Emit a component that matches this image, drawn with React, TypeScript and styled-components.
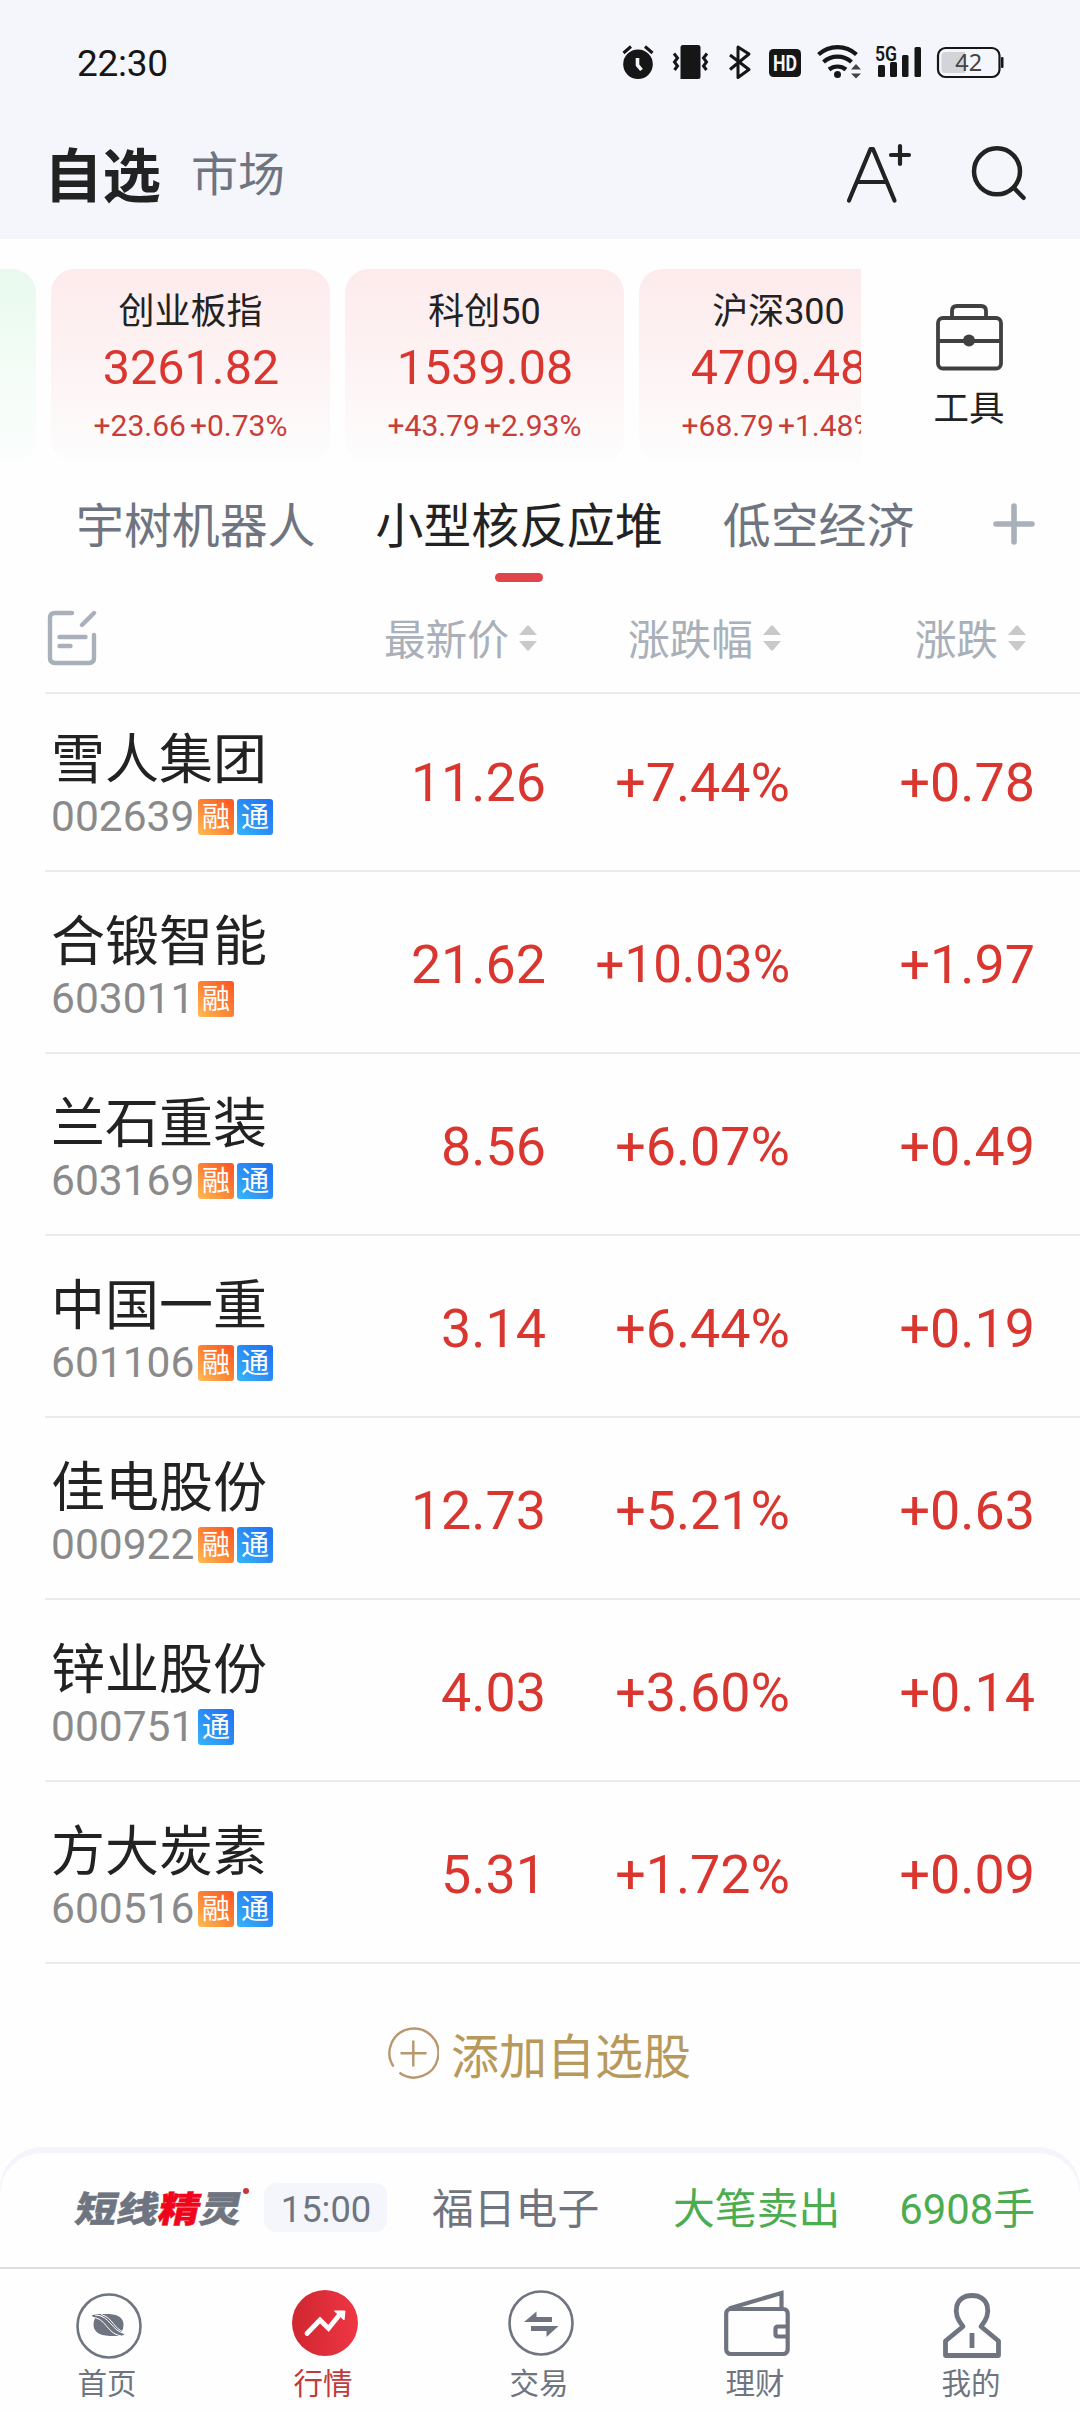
import React from 'react';
import styled, { createGlobalStyle } from 'styled-components';

const INK = '#222222';
const GREY = '#6f7580';
const SOFT = '#a9b0ba';
const RED = '#d9362f';
const PANEL = '#f4f6fb';

const Global = createGlobalStyle`
  * { box-sizing: border-box; }
  html, body { margin: 0; padding: 0; background: #fefefe; }
  body {
    font-family: Roboto, "Noto Sans CJK SC", sans-serif;
    color: ${INK};
  }
`;

const Screen = styled.div`
  width: 1080px;
  height: 2412px;
  display: flex;
  flex-direction: column;
  overflow: hidden;
  white-space: nowrap;
  svg { display: block; flex: none; }
`;

const StatusBar = styled.header`
  height: 124px;
  padding: 0 76px 0 77px;
  display: flex;
  align-items: center;
  justify-content: space-between;
  background: ${PANEL};
`;

const Clock = styled.span`
  margin-top: 3px;
  font-size: 37px;
  line-height: 40px;
  letter-spacing: -0.3px;
  color: #161616;
`;

const TitleBar = styled.div`
  height: 115px;
  padding: 0 54px 18px 44px;
  display: flex;
  align-items: center;
  background: ${PANEL};
`;

const PageTitle = styled.h1`
  margin: 8px 30px 0 0;
  font-size: 58.5px;
  line-height: 64px;
  font-weight: 700;
`;

const PageLink = styled.span`
  margin-top: 5px;
  font-size: 47px;
  line-height: 64px;
  color: ${GREY};
`;

const TitleActions = styled.div`
  margin-left: auto;
  display: flex;
  align-items: center;
  gap: 58px;
`;

const IndexStrip = styled.section`
  display: flex;
  padding-top: 30px;
  height: 224px;
`;

const IndexTrack = styled.div`
  width: 861px;
  display: flex;
  gap: 15px;
  overflow: hidden;
`;

const IndexCard = styled.div<{ $down?: boolean; $sliver?: boolean }>`
  flex: none;
  width: ${(p) => (p.$sliver ? 36 : 279)}px;
  height: 194px;
  padding-top: 21px;
  display: flex;
  flex-direction: column;
  align-items: center;
  border-radius: ${(p) => (p.$sliver ? '0 24px 24px 0' : '24px')};
  background: ${(p) =>
    p.$down
      ? 'linear-gradient(#e8f9ee, #f4fdf7 55%, #fcfdfd)'
      : 'linear-gradient(#fdebec, #fdf3f4 50%, #fcfdfd)'};
`;

const IndexName = styled.span`
  font-size: 36px;
  line-height: 44px;
`;

const IndexValue = styled.span`
  margin: 5px 0 0 1px;
  font-size: 48.5px;
  line-height: 58px;
  color: ${RED};
`;

const IndexDelta = styled.span`
  margin-top: 11px;
  display: flex;
  gap: 4px;
  font-size: 30px;
  line-height: 36px;
  color: #c93d38;
`;

const ToolButton = styled.div`
  flex: 1;
  padding: 34px 3px 0 0;
  display: flex;
  flex-direction: column;
  align-items: center;
  gap: 15px;
  font-size: 35.5px;
  line-height: 46px;
`;

const Tabs = styled.nav`
  height: 119px;
  padding: 40px 45px 0 76px;
  display: flex;
  gap: 60px;
`;

const Tab = styled.div<{ $active?: boolean }>`
  display: flex;
  flex-direction: column;
  align-items: center;
  gap: 22px;
  font-size: 47.9px;
  line-height: 48px;
  color: ${(p) => (p.$active ? INK : GREY)};
`;

const TabBar = styled.i`
  width: 48px;
  height: 9px;
  border-radius: 5px;
  background: #e0454b;
`;

const AddTab = styled.div`
  margin-left: auto;
`;

const Columns = styled.div`
  margin-left: 45px;
  padding-right: 45px;
  display: grid;
  grid-template-columns: 256px 245px 244px 245px;
  align-items: center;
  border-bottom: 2px solid #ebebeb;
`;

const HeadRow = styled(Columns)`
  height: 112px;
  padding-top: 2px;
`;

const HeadCell = styled.div`
  display: flex;
  justify-content: flex-end;
  align-items: center;
  gap: 10px;
  padding-right: 9px;
  font-size: 41.7px;
  line-height: 50px;
  color: ${SOFT};
  span { padding-top: 5px; }
`;

const StockRow = styled(Columns)<{ $first?: boolean }>`
  height: ${(p) => (p.$first ? 178 : 182)}px;
  padding-top: ${(p) => (p.$first ? 2 : 6)}px;
`;

const StockId = styled.div`
  padding-left: 6px;
`;

const StockName = styled.div`
  font-size: 54px;
  line-height: 62px;
`;

const StockMeta = styled.div`
  margin-top: 5px;
  display: flex;
  align-items: center;
  gap: 3px;
  height: 40px;
`;

const StockCode = styled.span`
  width: 144px;
  font-size: 42.5px;
  line-height: 40px;
  color: #8a8a8a;
`;

const Badge = styled.span<{ $kind: string }>`
  width: 36px;
  height: 36px;
  border-radius: 3px;
  text-align: center;
  font-size: 28px;
  line-height: 37px;
  color: #fff;
  background: ${(p) =>
    p.$kind === '融'
      ? 'linear-gradient(to top right, #ffbd55, #fb8838 45%, #ff5322)'
      : 'linear-gradient(to top right, #37b6f8, #2b8df4 50%, #1f70f2)'};
`;

const Figure = styled.div<{ $long?: boolean }>`
  text-align: right;
  font-size: ${(p) => (p.$long ? 51 : 53.8)}px;
  line-height: 64px;
  color: ${RED};
`;

const AddStock = styled.div`
  height: 183px;
  padding: 0 0 6px 387px;
  display: flex;
  align-items: center;
  gap: 12px;
  font-size: 48px;
  color: #b8995c;
`;

const AlertShell = styled.section`
  height: 120px;
  padding-top: 6px;
  border-radius: 42px 42px 0 0;
  background: #f3f5fa;
`;

const AlertBar = styled.div`
  height: 114px;
  padding: 0 45px 5px 76px;
  display: flex;
  align-items: center;
  border-radius: 42px 42px 0 0;
  background: #fefefe;
  font-size: 41.8px;
  line-height: 50px;
  color: ${GREY};
`;

const Brand = styled.div`
  width: 188px;
  height: 48px;
  margin-top: 5px;
  display: flex;
  position: relative;
`;

const BrandText = styled.b`
  font-size: 41.5px;
  line-height: 48px;
  font-weight: 900;
  -webkit-text-stroke: 0.6px currentColor;
  transform: skewX(-12deg) scaleY(0.86);
  em { font-style: normal; color: #f0041c; }
`;

const BrandDot = styled.i`
  position: absolute;
  left: 167px;
  top: 2px;
  width: 6px;
  height: 6px;
  border-radius: 50%;
  background: #c8363c;
`;

const TimePill = styled.span`
  width: 123px;
  height: 49px;
  margin-right: 45px;
  padding-left: 1px;
  border-radius: 12px;
  background: ${PANEL};
  text-align: center;
  font-size: 36.3px;
  line-height: 54px;
`;

const AlertText = styled.span`
  padding-top: 5px;
`;

const Sold = styled(AlertText)`
  margin-left: auto;
  display: flex;
  gap: 59px;
  color: #4cac50;
`;

const BottomNav = styled.nav`
  height: 145px;
  display: grid;
  grid-template-columns: repeat(5, 1fr);
  border-top: 2px solid #dedfe1;
  background: #fefefe;
`;

const NavItem = styled.div<{ $active?: boolean }>`
  padding-top: 20px;
  display: flex;
  flex-direction: column;
  align-items: center;
  font-size: 29.5px;
  line-height: 36px;
  color: ${(p) => (p.$active ? '#c23a3a' : GREY)};
  svg { margin: 0 0 7px 2px; }
  span { margin-left: -2px; }
`;

const StatusIcons = () => (
  <svg width="384" height="40" viewBox="620 42 384 40" fill="#161616">
    <circle cx="638" cy="64.3" r="14.8" />
    <path d="M623.5 53l7.5-6.5M652.5 53l-7.5-6.5" stroke="#161616" strokeWidth="3" />
    <path d="M637.5 58v7l4 5" stroke={PANEL} strokeWidth="3.6" fill="none" />
    <path d="M683 45h15q2.500 0 2.500 2.500v29q0 2.500-2.500 2.500H680.500V47.500q0-2.500 2.500-2.500z" />
    <path d="M674 53l3.500 4.500-3 4 3 4-3 4M707 53l-3.500 4.500 3 4-3 4 3 4" transform="translate(0 .5)" stroke="#161616" strokeWidth="3" fill="none" />
    <path d="M730 55l19 14.500-11 8V47l11 7-19 15.500" stroke="#161616" strokeWidth="3" fill="none" strokeLinejoin="round" />
    <rect x="769" y="49" width="32" height="28" rx="4.500" />
    <text x="785" y="71" textAnchor="middle" fontFamily="Roboto, sans-serif" fontSize="22.5" fontWeight="700" fill={PANEL} textLength="24" lengthAdjust="spacingAndGlyphs">HD</text>
    <g fill="none" stroke="#161616" strokeWidth="4.200">
      <path d="M818.500 54.500a28 28 0 0 1 38 0" />
      <path d="M823.500 62a21 21 0 0 1 28 0" />
      <path d="M829 69.500a13.500 13.500 0 0 1 17 0" />
    </g>
    <circle cx="837.500" cy="74.500" r="3.500" />
    <path d="M851 69.500l5-5.500 5 5.500zM851 73.500l5 5 5-5z" fill="#444" />
    <text x="875" y="60.500" fontFamily="Roboto, sans-serif" fontSize="21" fontWeight="600" textLength="22" lengthAdjust="spacingAndGlyphs">5G</text>
    <rect x="878" y="65" width="7" height="12" rx="1.500" />
    <rect x="890" y="62" width="7" height="15" rx="1.500" />
    <rect x="902" y="55" width="6.500" height="22" rx="1.500" />
    <rect x="914.500" y="47" width="6.500" height="30" rx="1.500" />
    <rect x="938" y="48" width="61.500" height="29" rx="7.500" fill="none" stroke="#161616" strokeWidth="2.200" />
    <path d="M945 52h20v21h-20q-3.500 0-3.500-3.500v-14q0-3.500 3.500-3.500z" fill="#d2d4d8" />
    <rect x="1001" y="57" width="2.500" height="11" rx="1" />
    <text x="968.700" y="71.300" textAnchor="middle" fontFamily="Noto Sans, sans-serif" fontSize="23.500" fill="#444">42</text>
  </svg>
);

const FontSizeIcon = () => (
  <svg width="66" height="62" viewBox="846 142 66 62" fill="none" stroke={INK} strokeWidth="4.200" strokeLinecap="round" strokeLinejoin="round">
    <path d="M849 200.500L870.500 149h2.500L894.500 200.500M857 182h29M900 146v18M891 155h18" />
  </svg>
);

const SearchIcon = () => (
  <svg width="56" height="62" viewBox="970 142 56 62" fill="none" stroke={INK} strokeWidth="4.500" strokeLinecap="round">
    <circle cx="997" cy="171.300" r="23" />
    <path d="M1014.500 188.500l9 9.300" />
  </svg>
);

const BriefcaseIcon = () => (
  <svg width="68" height="68" viewBox="935 303 68 68" fill="none" stroke="#404040" strokeWidth="3.800">
    <path d="M952 317v-6q0-5 5-5h24q5 0 5 5v6" />
    <rect x="938" y="318" width="63" height="50.500" rx="5" />
    <path d="M938 341h63" />
    <circle cx="969" cy="340.500" r="6" fill="#404040" stroke="none" />
  </svg>
);

const PlusIcon = () => (
  <svg width="42" height="42" viewBox="0 0 42 42" stroke={SOFT} strokeWidth="5.600" strokeLinecap="round">
    <path d="M21 3v36M3 21h36" />
  </svg>
);

const EditIcon = () => (
  <svg width="54" height="56" viewBox="45 610 54 56" fill="none" stroke={SOFT} strokeWidth="4.400" strokeLinecap="round" strokeLinejoin="round">
    <path d="M72 613H55q-5 0-5 5v40q0 5 5 5h34q5 0 5-5V635M94 613L82 625M59.500 637h26M59.500 646h11" />
  </svg>
);

const SortIcon = () => (
  <svg width="18" height="26" viewBox="0 0 18 26" fill="#c9c9c9">
    <path d="M0 10L8 .8q1-.8 2 0L18 10zM0 16l8 9.200q1 .8 2 0L18 16z" />
  </svg>
);

const CirclePlusIcon = () => (
  <svg width="52" height="52" viewBox="387.500 2027.500 52 52" fill="none" stroke="#b8976c" strokeWidth="2.400">
    <path d="M400 2073.300A24.500 24.500 0 1 0 394 2067M401 2053.700h26M413.800 2041v26" />
  </svg>
);

const HomeIcon = () => (
  <svg width="66" height="70" viewBox="76 2289 66 70">
    <circle cx="109" cy="2326" r="31.500" fill="none" stroke={GREY} strokeWidth="2.600" />
    <path d="M91.500 2315.500q3-1.500 8-1.500h10q14 1 14 11 0 4-2 7l3 2.500q-3 1.500-9 1.500h-6q-16-1-16-11.500 0-3.500 1.500-6z" fill={GREY} />
    <path d="M91 2317.500c15-1 15 16 30 18.500M95 2315c15 0 17 17 30 18.500M101 2314.500c12 3 13 15 23 17.500" fill="none" stroke="#fefefe" strokeWidth="1" />
  </svg>
);

const TrendIcon = () => (
  <svg width="66" height="70" viewBox="292 2289 66 70">
    <defs>
      <linearGradient id="trend" x1="0" x2="1">
        <stop offset="0" stopColor="#cf2630" />
        <stop offset="1" stopColor="#ef3644" />
      </linearGradient>
    </defs>
    <circle cx="325" cy="2323" r="33" fill="url(#trend)" />
    <path d="M307 2333.500l13-13.500 8.500 8.500 12-15" fill="none" stroke="#fff" strokeWidth="4.800" strokeLinecap="round" />
    <path d="M334.500 2311h10.500l-1 9z" fill="#fff" stroke="#fff" strokeWidth="1" />
  </svg>
);

const TradeIcon = () => (
  <svg width="66" height="70" viewBox="508 2289 66 70">
    <circle cx="541" cy="2323" r="31.500" fill="none" stroke={GREY} strokeWidth="2.600" />
    <path d="M524 2322l12.500-10.500v5.500H552v5zM558.500 2326L546.500 2337v-6H531v-5z" fill={GREY} />
  </svg>
);

const WalletIcon = () => (
  <svg width="66" height="70" viewBox="724 2289 66 70" fill="none" stroke={GREY} strokeWidth="4.200">
    <rect x="726.200" y="2309" width="61.500" height="45" rx="4.500" />
    <path d="M729 2308.500L781.500 2293v16M787 2326.500h-9q-2.500 0-2.500 2.500v5q0 2.500 2.500 2.500h9" />
  </svg>
);

const PersonIcon = () => (
  <svg width="60" height="70" viewBox="943 2289 60 70" fill="none" stroke={GREY} strokeWidth="4.800" strokeLinejoin="round">
    <path d="M963 2326.500C951.500 2313 955 2295.500 972 2295.500S992.500 2313 981 2326.500L998.500 2341v14.500H945.500V2341z" />
    <path d="M972 2333v15" />
  </svg>
);

const indices = [
  ['创业板指', '3261.82', '+23.66', '+0.73%'],
  ['科创50', '1539.08', '+43.79', '+2.93%'],
  ['沪深300', '4709.48', '+68.79', '+1.48%'],
];

const stocks: [string, string, string[], string, string, string][] = [
  ['雪人集团', '002639', ['融', '通'], '11.26', '+7.44%', '+0.78'],
  ['合锻智能', '603011', ['融'], '21.62', '+10.03%', '+1.97'],
  ['兰石重装', '603169', ['融', '通'], '8.56', '+6.07%', '+0.49'],
  ['中国一重', '601106', ['融', '通'], '3.14', '+6.44%', '+0.19'],
  ['佳电股份', '000922', ['融', '通'], '12.73', '+5.21%', '+0.63'],
  ['锌业股份', '000751', ['通'], '4.03', '+3.60%', '+0.14'],
  ['方大炭素', '600516', ['融', '通'], '5.31', '+1.72%', '+0.09'],
];

export default function App() {
  return (
    <Screen>
      <Global />
      <StatusBar>
        <Clock>22:30</Clock>
        <StatusIcons />
      </StatusBar>
      <TitleBar>
        <PageTitle>自选</PageTitle>
        <PageLink>市场</PageLink>
        <TitleActions>
          <FontSizeIcon />
          <SearchIcon />
        </TitleActions>
      </TitleBar>

      <IndexStrip>
        <IndexTrack>
          <IndexCard $down $sliver />
          {indices.map(([name, value, diff, pct]) => (
            <IndexCard key={name}>
              <IndexName>{name}</IndexName>
              <IndexValue>{value}</IndexValue>
              <IndexDelta>
                <span>{diff}</span>
                <span>{pct}</span>
              </IndexDelta>
            </IndexCard>
          ))}
        </IndexTrack>
        <ToolButton>
          <BriefcaseIcon />
          <span>工具</span>
        </ToolButton>
      </IndexStrip>

      <Tabs>
        <Tab>宇树机器人</Tab>
        <Tab $active>
          小型核反应堆
          <TabBar />
        </Tab>
        <Tab>低空经济</Tab>
        <AddTab>
          <PlusIcon />
        </AddTab>
      </Tabs>

      <HeadRow>
        <EditIcon />
        {['最新价', '涨跌幅', '涨跌'].map((label) => (
          <HeadCell key={label}>
            <span>{label}</span>
            <SortIcon />
          </HeadCell>
        ))}
      </HeadRow>

      {stocks.map(([name, code, badges, price, pct, diff], i) => (
        <StockRow key={code} $first={i === 0}>
          <StockId>
            <StockName>{name}</StockName>
            <StockMeta>
              <StockCode>{code}</StockCode>
              {badges.map((b) => (
                <Badge key={b} $kind={b}>{b}</Badge>
              ))}
            </StockMeta>
          </StockId>
          <Figure>{price}</Figure>
          <Figure $long={pct.length > 6}>{pct}</Figure>
          <Figure>{diff}</Figure>
        </StockRow>
      ))}

      <AddStock>
        <CirclePlusIcon />
        <span>添加自选股</span>
      </AddStock>

      <AlertShell>
        <AlertBar>
          <Brand>
            <BrandText>短线<em>精</em>灵</BrandText>
            <BrandDot />
          </Brand>
          <TimePill>15:00</TimePill>
          <AlertText>福日电子</AlertText>
          <Sold>
            <span>大笔卖出</span>
            <span>6908手</span>
          </Sold>
        </AlertBar>
      </AlertShell>

      <BottomNav>
        <NavItem><HomeIcon /><span>首页</span></NavItem>
        <NavItem $active><TrendIcon /><span>行情</span></NavItem>
        <NavItem><TradeIcon /><span>交易</span></NavItem>
        <NavItem><WalletIcon /><span>理财</span></NavItem>
        <NavItem><PersonIcon /><span>我的</span></NavItem>
      </BottomNav>
    </Screen>
  );
}
